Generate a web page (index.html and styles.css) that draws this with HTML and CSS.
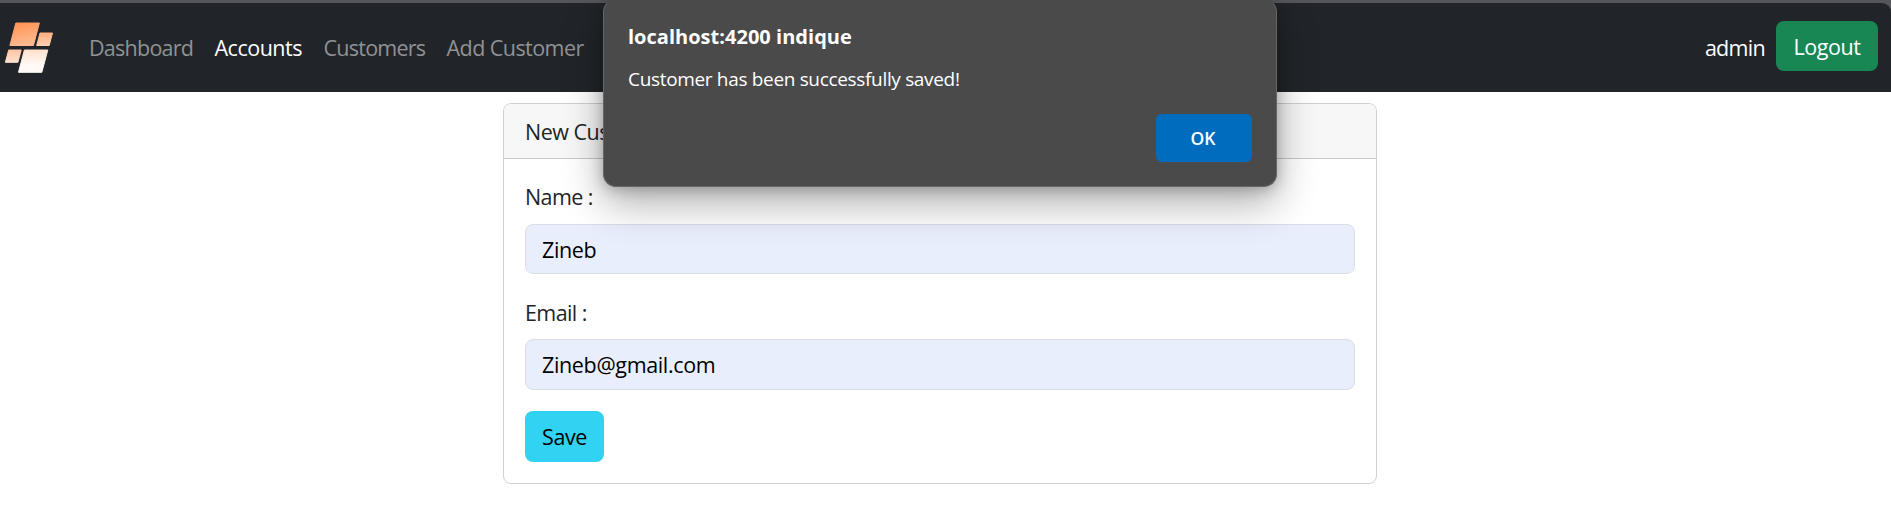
FILE: index.html
```html
<!DOCTYPE html>
<html lang="en">
<head>
<meta charset="utf-8">
<title>New Customer</title>
<link rel="stylesheet" href="styles.css">
</head>
<body>
<div class="page">
  <nav class="navbar">
    <svg class="logo" width="56" height="56" viewBox="0 20 56 56">
      <defs>
        <linearGradient id="g1" x1="0" y1="0" x2=".3" y2="1"><stop offset="0" stop-color="#ff9150"/><stop offset="1" stop-color="#ffb98f"/></linearGradient>
        <linearGradient id="g2" x1="0" y1="0" x2="0" y2="1"><stop offset="0" stop-color="#ffae80"/><stop offset="1" stop-color="#ffd0b3"/></linearGradient>
        <linearGradient id="g3" x1="0" y1="0" x2="0" y2="1"><stop offset="0" stop-color="#ffc5a3"/><stop offset="1" stop-color="#ffe0ce"/></linearGradient>
        <linearGradient id="g4" x1="0" y1="0" x2="0" y2="1"><stop offset="0" stop-color="#ffe0cd"/><stop offset=".7" stop-color="#fffaf7"/></linearGradient>
      </defs>
      <g stroke-linejoin="round" stroke-width="1">
        <path fill="url(#g1)" stroke="url(#g1)" d="M15.8 23h23.6l-6 22.5H9.9z"/>
        <path fill="url(#g2)" stroke="url(#g2)" d="M40 33h12.5l-3.3 12.5H36.7z"/>
        <path fill="url(#g3)" stroke="url(#g3)" d="M8.7 50h12.5l-3.3 12.3H5.4z"/>
        <path fill="url(#g4)" stroke="url(#g4)" d="M24.4 50h23.4l-6 22.3H18.5z"/>
      </g>
    </svg>
    <div class="links">
      <a class="link dashboard">Dashboard</a>
      <a class="link accounts active">Accounts</a>
      <a class="link customers">Customers</a>
      <a class="link add">Add Customer</a>
    </div>
    <span class="user">admin</span>
    <button class="btn logout">Logout</button>
  </nav>
  <main class="card">
    <div class="card-header">New Customer</div>
    <form class="card-body">
      <label class="label name">Name :</label>
      <div class="field short">Zineb</div>
      <label class="label email">Email :</label>
      <div class="field mail">Zineb@gmail.com</div>
      <button class="btn save" type="button">Save</button>
    </form>
  </main>
  <div class="dialog">
    <div class="dialog-title">localhost:4200 indique</div>
    <div class="dialog-text">Customer has been successfully saved!</div>
    <button class="ok">OK</button>
  </div>
</div>
</body>
</html>
```
FILE: styles.css
```css
* { box-sizing: border-box; }
body { margin: 0; background: #fff; overflow: hidden; }
.page {
  position: relative; height: 516px; padding-top: 3px; overflow: hidden;
  font: 21.5px/33px "Open Sans", "Noto Sans", sans-serif; color: #212529;
  background: linear-gradient(#55565b 15px, #fff 15px);
}
button { border: 0; font: inherit; margin: 0; white-space: nowrap; }
.navbar {
  height: 89px; background: #212529; border-top-right-radius: 9px;
  display: flex; align-items: center; padding-right: 13px; color: #fff;
}
.logo { display: block; flex: none; }
.links { display: flex; gap: 22px; margin-left: 33px; flex: 1; }
.link { color: #909294; white-space: nowrap; }
.link.active { color: #fff; }
.dashboard { width: 103.5px; letter-spacing: -.75px; }
.accounts { width: 87px; letter-spacing: -.5px; }
.customers { width: 101px; letter-spacing: -.75px; }
.add { letter-spacing: -.55px; }
.user { margin-right: 11px; letter-spacing: -.7px; }
.btn { border-radius: 8px; text-align: center; padding: 0; }
.logout { width: 102px; height: 50px; background: #198754; color: #fff; letter-spacing: -.4px; margin-top: -3px; }
.card {
  width: 874px; height: 381px; margin: 11px 0 0 503px;
  border: 1px solid #cfd0d0; border-radius: 8px; overflow: hidden; background: #fff;
}
.card-header {
  height: 55px; padding: 11px 21px; background: #f7f7f7;
  border-bottom: 1px solid #c8c8c8; letter-spacing: -.5px;
}
.card-body { padding: 21px; display: flex; flex-direction: column; align-items: stretch; }
.label { height: 33px; margin: 0 0 11px; letter-spacing: -.6px; }
.email { margin: 1px 0 10px; }
.field {
  height: 50px; padding: 8px 16px; margin-bottom: 21px; color: #000;
  background: #e8eefc; border: 1px solid #d9dee6; border-radius: 8px; letter-spacing: -.35px;
}
.mail { height: 51px; }
.save { align-self: flex-start; width: 79px; height: 51px; background: #31d2f2; color: #000; letter-spacing: -.4px; }
.dialog {
  position: absolute; left: 603px; top: -1px; width: 674px; height: 188px;
  padding: 24px; background: #4a4a4a; color: #fff; border: 1px solid #666; border-top-color: #4a4a4a; border-radius: 13px;
  box-shadow: 0 16px 40px rgba(0,0,0,.32), 0 2px 14px rgba(0,0,0,.24);
  display: flex; flex-direction: column; font-size: 19px; line-height: 28px;
}
.dialog-title { font-size: 20px; font-weight: 700; letter-spacing: .02px; margin-top: -1px; }
.dialog-text { margin-top: 14px; letter-spacing: -.33px; }
.ok {
  align-self: flex-end; margin-top: 21px; width: 96px; height: 48px; flex: none; padding: 0 8px 1px 6px;
  background: #006cbe; color: #fff; border-radius: 6px; font-size: 17.5px; font-weight: 600;
}
```
